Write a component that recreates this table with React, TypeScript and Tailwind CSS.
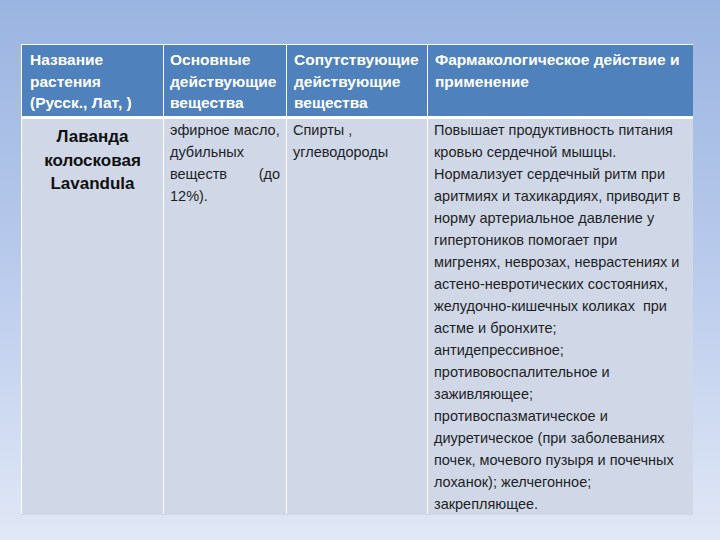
import React from "react";

const body4 = [
  "Повышает продуктивность питания",
  "кровью сердечной мышцы.",
  "Нормализует сердечный ритм при",
  "аритмиях и тахикардиях, приводит в",
  "норму артериальное давление у",
  "гипертоников помогает при",
  "мигренях, неврозах, неврастениях и",
  "астено-невротических состояниях,",
  "желудочно-кишечных коликах  при",
  "астме и бронхите;",
  "антидепрессивное;",
  "противовоспалительное и",
  "заживляющее;",
  "противоспазматическое и",
  "диуретическое (при заболеваниях",
  "почек, мочевого пузыря и почечных",
  "лоханок); желчегонное;",
  "закрепляющее.",
];

export default function App() {
  return (
    <div
      className="w-[720px] h-[540px] bg-gradient-to-b from-[#9ab4e1] via-[#bacbec] to-[#e1e8f6] pt-[44px] pl-[21px]"
      style={{ fontFamily: '"Liberation Sans", Arial, sans-serif' }}
    >
      <div className="w-[672px] bg-white p-px flex flex-col gap-[3px] shadow-[0_1px_0_#c4d0e6]">
        <div className="grid grid-cols-[141px_122px_140px_265px] gap-px h-[71px] text-white font-bold text-[15.5px] leading-[21.5px]">
          <div className="bg-[#4f81bd] pl-[8px] pt-[4px]">
            <div>Название</div>
            <div>растения</div>
            <div>(Русск., Лат, )</div>
          </div>
          <div className="bg-[#4f81bd] pl-[6px] pt-[4px]">
            <div>Основные</div>
            <div>действующие</div>
            <div>вещества</div>
          </div>
          <div className="bg-[#4f81bd] pl-[7px] pt-[4px]">
            <div>Сопутствующие</div>
            <div>действующие</div>
            <div>вещества</div>
          </div>
          <div className="bg-[#4f81bd] pl-[7px] pt-[4px] whitespace-nowrap">
            <div>Фармакологическое действие и</div>
            <div>применение</div>
          </div>
        </div>
        <div className="grid grid-cols-[141px_122px_140px_265px] gap-px h-[394px] text-[#1f1f1f] text-[14.5px] leading-[22px]">
          <div className="bg-[#d0d8e8] pt-[6px] text-center font-bold text-[17px] leading-[23.5px] text-[#111]">
            <div>Лаванда</div>
            <div>колосковая</div>
            <div>Lavandula</div>
          </div>
          <div className="bg-[#d0d8e8] pl-[6px] pr-[6px] whitespace-nowrap">
            <div>эфирное масло,</div>
            <div>дубильных</div>
            <div className="flex justify-between">
              <span>веществ</span>
              <span>(до</span>
            </div>
            <div>12%).</div>
          </div>
          <div className="bg-[#d0d8e8] pl-[6px] whitespace-nowrap">
            <div>Спирты ,</div>
            <div>углеводороды</div>
          </div>
          <div className="bg-[#d0d8e8] pl-[6px] whitespace-pre">
            {body4.map((l, i) => (
              <div key={i}>{l}</div>
            ))}
          </div>
        </div>
      </div>
    </div>
  );
}
